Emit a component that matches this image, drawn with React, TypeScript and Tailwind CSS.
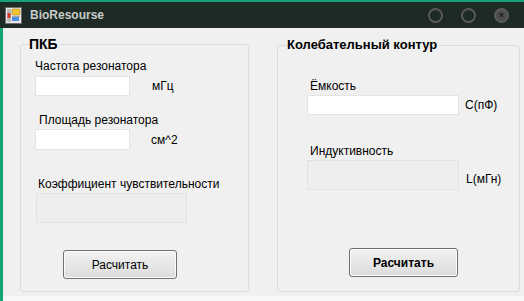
import * as React from "react";

const font = { fontFamily: '"Liberation Sans", Arial, sans-serif' };

// small app icon in the caption
const AppIcon: React.FC = () => (
  <svg width="17" height="17" viewBox="0 0 17 17">
    <rect x="0.5" y="0.5" width="16" height="16" fill="#e8e8e8" stroke="#6b6b6b" />
    <rect x="2" y="2" width="4" height="13" fill="#b8b8b8" />
    <rect x="2.5" y="6" width="3" height="5" fill="#d83a2a" />
    <rect x="7" y="2" width="8" height="6" rx="1" fill="#f1c232" stroke="#b08a10" strokeWidth="0.6" />
    <rect x="7" y="10" width="7" height="4" fill="#4a8fe0" />
    <rect x="7" y="9" width="8" height="0.8" fill="#9a9a9a" />
  </svg>
);

const CaptionButton: React.FC<{ close?: boolean }> = ({ close }) => (
  <div
    className={`w-[15px] h-[15px] rounded-full border-[2.5px] flex items-center justify-center ${
      close ? "border-[#5a5a5a] bg-[#4e4e4e]" : "border-[#5b5b5b]"
    }`}
  >
    {close && <span className="text-[#1b1b1b] text-[9px] leading-none font-bold">×</span>}
  </div>
);

const TextBox: React.FC<{ className: string; readOnly?: boolean }> = ({ className, readOnly }) => (
  <div
    className={`${className} border ${
      readOnly ? "bg-[#eeeeee] border-[#e2e2e2]" : "bg-white border-[#e4e4e4]"
    }`}
  />
);

const App: React.FC = () => {
  return (
    <div className="w-[524px] h-[301px] flex flex-col bg-[#f8f8f8] overflow-hidden text-black" style={font}>
      {/* caption */}
      <div className="h-[28px] flex items-center bg-[#1d2a26] border-t-[2px] border-t-[#17a07a] pl-[5px] pr-[15px] shrink-0">
        <AppIcon />
        <span className="ml-[8px] text-[12px] font-bold text-[#c9cccb]">BioResourse</span>
        <div className="ml-auto flex items-center gap-[18px]">
          <CaptionButton />
          <CaptionButton />
          <CaptionButton close />
        </div>
      </div>

      {/* body */}
      <div className="h-[268px] flex bg-[#f0f0f0] border-l-[3px] border-l-[#11a374] pl-[17px] pr-[4px] pt-[16px]">
        {/* ПКБ */}
        <div className="relative w-[229px] h-[248px] border border-[#dcdcdc] rounded-[3px] pl-[14px]">
          <span className="absolute left-[8px] -top-[10px] bg-[#f0f0f0] pr-[2px] text-[14px] font-bold leading-[18px]">
            ПКБ
          </span>
          <div className="pt-[14px] text-[12px] leading-[14px]">Частота резонатора</div>
          <div className="mt-[3px] flex items-center">
            <TextBox className="w-[95px] h-[20px]" />
            <span className="ml-[22px] text-[12px]">мГц</span>
          </div>
          <div className="mt-[17px] pl-[4px] text-[12px] leading-[14px]">Площадь резонатора</div>
          <div className="mt-[2px] flex items-center">
            <TextBox className="w-[95px] h-[21px]" />
            <span className="ml-[21px] text-[12px]">см^2</span>
          </div>
          <div className="mt-[27px] pl-[3px] text-[12px] leading-[14px]">Коэффициент чувствительности</div>
          <div className="mt-[2px] pl-[1px]">
            <TextBox className="w-[151px] h-[30px]" readOnly />
          </div>
          <div className="mt-[27px] pl-[28px]">
            <button className="w-[114px] h-[29px] rounded-[3px] border border-[#707070] bg-gradient-to-b from-[#f2f2f2] to-[#dcdcdc] text-[12px] shadow-[inset_0_0_0_1px_#fcfcfc]">
              Расчитать
            </button>
          </div>
        </div>

        {/* Колебательный контур */}
        <div className="relative ml-[28px] mt-[1px] w-[243px] h-[247px] border border-[#dcdcdc] rounded-[3px] pl-[29px]">
          <span className="absolute left-[9px] -top-[10px] bg-[#f0f0f0] pr-[2px] text-[13px] font-bold leading-[18px]">
            Колебательный контур
          </span>
          <div className="pt-[33px] pl-[3px] text-[12px] leading-[14px]">Ёмкость</div>
          <div className="mt-[2px] flex items-center">
            <TextBox className="w-[152px] h-[20px]" />
            <span className="ml-[6px] text-[12px]">С(пФ)</span>
          </div>
          <div className="mt-[29px] pl-[3px] text-[12px] leading-[14px]">Индуктивность</div>
          <div className="mt-[2px] flex items-end">
            <TextBox className="w-[152px] h-[30px]" readOnly />
            <span className="ml-[7px] mb-[2px] text-[12px]">L(мГн)</span>
          </div>
          <div className="mt-[58px] pl-[42px]">
            <button className="w-[109px] h-[29px] rounded-[3px] border border-[#707070] bg-gradient-to-b from-[#f2f2f2] to-[#dcdcdc] text-[12px] font-bold shadow-[inset_0_0_0_1px_#fcfcfc]">
              Расчитать
            </button>
          </div>
        </div>
      </div>

      <div className="flex-1 bg-[#f7f7f7] border-l-[3px] border-l-[#11a374]" />
    </div>
  );
};

export default App;
